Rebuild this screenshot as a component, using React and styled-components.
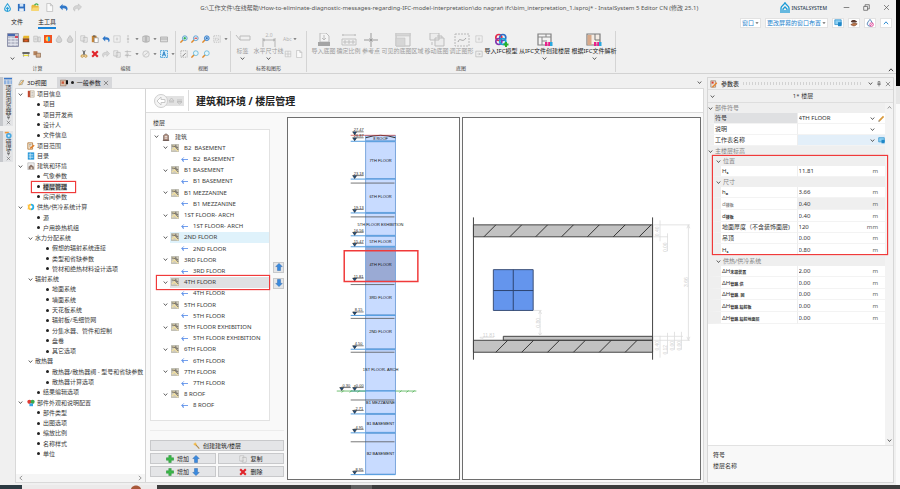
import { useState } from 'react';
import styled, { createGlobalStyle, css } from 'styled-components';

const GlobalStyle = createGlobalStyle`
    * {
        box-sizing: border-box;
    }
    body {
        margin: 0;
        overflow: hidden;
        background: #f0f0f0;
        color: #3a3a3a;
        font-family: "Noto Sans", "Noto Sans CJK SC", sans-serif;
        font-size: 6px;
        line-height: 8px;
    }
    button, input, select {
        margin: 0;
        padding: 0;
        border: 0;
        border-radius: 0;
        background: none;
        color: inherit;
        font: inherit;
    }
    svg {
        display: block;
        flex: none;
    }
`;

const redFrame = css`
    content: '';
    position: absolute;
    border: 1px solid #f03a3a;
    box-shadow: 0 0 1px #f03a3a;
    pointer-events: none;
`;

/* ---------- icons, drawn on a 10 x 10 grid ---------- */

const shapes = {
    drop: <path d="M5 .5C3 3.500 1.500 5 1.500 6.500a3.500 3 0 0 0 7 0C8.500 5 7 3.500 5 .5z" fill="#d4d4d4" stroke="#b4b4b4" strokeWidth=".8" />,
    dropBlue: <path d="M5 .8C3 3.500 1.800 5 1.800 6.500a3.200 2.800 0 0 0 6.400 0C8.200 5 7 3.500 5 .8zM5 9V5.500M3.500 6.500L5 5l1.500 1.500" fill="#dff2fb" stroke="#2a9fd6" strokeWidth="1.200" />,
    save: <><path d="M1 1h8v8H1z" fill="#2f6fc0" /><path d="M3 1h4v3H3z" fill="#cfe3f7" /><path d="M2.500 6h5v3h-5z" fill="#e8eef5" /></>,
    open: <><path d="M.5 3l1-1h3l1 1h3v5.500h-8z" fill="#e8b93c" /><path d="M2 5h7.500L8 9H.5z" fill="#f7d774" /><path d="M4 2.500C5 .5 7 .5 8 2.500" stroke="#3fae49" strokeWidth="1.500" fill="none" /></>,
    doc: <path d="M2 .5h4l2.500 2.500v6.500H2zM6 .5V3h2.500" fill="#fafafa" stroke="#b8b8b8" strokeWidth=".8" />,
    undo: <path d="M.5 4.500L4 1v2c3.500-.5 5.500 1 5.500 3.500 0 1-.5 2-1.500 2.500.5-2-.5-3.500-4-3.200V8z" fill="#2f77c9" />,
    redo: <path d="M9.500 4.500L6 1v2C2.500 2.500.5 4 .5 6.500c0 1 .5 2 1.500 2.500-.5-2 .5-3.500 4-3.200V8z" fill="#d6d6d6" stroke="#b5b5b5" strokeWidth=".5" />,
    boiler: <><path d="M1 4h8v5H1z" fill="#8a4a20" /><path d="M2 1h7v3H1z" fill="#e9b72e" /><path d="M3 6h4v2H3z" fill="#e55a28" /></>,
    grid: <path d="M1.500 1.500h7v7h-7zM5 1.500v7M1.500 5h7" fill="#f2f2f2" stroke="#bdbdbd" strokeWidth=".8" />,
    sheet: <path d="M1 1.500h4.500v7H1zM6.500 2.500h2.500v6H6.500zM2 4h2.500M2 6h2.500" fill="#ececec" stroke="#b0b0b0" strokeWidth=".8" />,
    heat: <><path d="M0 0h10v10H0z" fill="#f4511e" /><path d="M5 2a3 3 0 0 0 0 6z" fill="#ffd54f" /><path d="M5 2a3 3 0 0 1 0 6z" fill="#29a9e0" /></>,
    machine: <><path d="M.5 2.500h9V5h-9z" fill="#666" /><path d="M1 6h8v1.500H1z" fill="#f0e52c" /><path d="M2 5v3.500M8 5v3.500" stroke="#999" /></>,
    blocks: <><path d="M.5 1.500h5v5h-5z" fill="#b5835c" /><path d="M4 4h5.500v5H4z" fill="#d9b08c" stroke="#7d5a3f" strokeWidth=".8" /></>,
    copy: <path d="M1 1h5v6.500H1zM4 3h5v6H4z" fill="#efefef" stroke="#b4b4b4" strokeWidth=".8" />,
    paste: <><path d="M1 1h6v8H1z" fill="#c98534" /><path d="M2.500 .5h3v1.500h-3z" fill="#555" /><path d="M4 3.500h5v6H4z" fill="#fff" stroke="#777" strokeWidth=".7" /></>,
    stretch: <path d="M1 1h8v8H1zM5 3v4M3.500 5h3" fill="none" stroke="#c2c2c2" strokeWidth=".8" />,
    node: <path d="M5 0v3M5 7v3M4 5a1 1 0 0 0 2 0 1 1 0 0 0-2 0" fill="none" stroke="#b0b0b0" strokeWidth=".9" />,
    mirror: <path d="M5 0v10M1 2l3-1v8l-3-1zM9 2L6 1v8l3-1z" fill="#ddd" stroke="#9a9a9a" strokeWidth=".8" />,
    keyboard: <path d="M.5 2.500h9v6h-9zM.5 5h9" fill="#ddd" stroke="#a0a0a0" strokeWidth=".9" />,
    cut: <><path d="M3.500 .5L6 6M6.500 .5L4 6" stroke="#555" strokeWidth="1.200" /><circle cx="2.800" cy="7.600" r="1.500" fill="none" stroke="#c68a1e" strokeWidth="1.100" /><circle cx="7.200" cy="7.600" r="1.500" fill="none" stroke="#c68a1e" strokeWidth="1.100" /></>,
    cross: <path d="M1.500 1.500l7 7M8.500 1.500l-7 7" stroke="#e0242a" strokeWidth="2.600" />,
    axis: <path d="M1 2h8M1 7h8M4 .5v9M2 5l2 2 2-2" fill="none" stroke="#b4b4b4" strokeWidth=".9" />,
    circleSlash: <path d="M5 1a4 4 0 1 1 0 8 4 4 0 0 1 0-8zM2.500 7l5-4" fill="#efefef" stroke="#bcbcbc" strokeWidth=".9" />,
    selectA: <><path d="M.5 .5h9v9h-9z" fill="#d9effb" stroke="#1b8ad0" strokeWidth="1" strokeDasharray="2 1" /><path d="M3 8l2-6 2 6M3.700 6h2.600" fill="none" stroke="#1b78c0" strokeWidth="1.100" /></>,
    zoomIn: <><path d="M.5 9.500L4 6" stroke="#e08a2c" strokeWidth="1.800" /><circle cx="6" cy="4" r="3" fill="#e4f3fc" stroke="#4a96cf" /><path d="M6 2.300v3.400M4.300 4h3.400" stroke="#1ca53a" strokeWidth="1.200" /></>,
    zoomOut: <><path d="M.5 9.500L4 6" stroke="#e08a2c" strokeWidth="1.800" /><circle cx="6" cy="4" r="3" fill="#e4f3fc" stroke="#4a96cf" /><path d="M4.300 4h3.400" stroke="#d8332c" strokeWidth="1.300" /></>,
    zoomFit: <><path d="M.5 9.500L4 6" stroke="#e08a2c" strokeWidth="1.800" /><circle cx="6" cy="4" r="3" fill="#9cc8ee" stroke="#2f77c9" /><path d="M5 4h2M6 3v2" stroke="#1c5aa8" /></>,
    zoomView: <><path d="M.5 9.500L4 6" stroke="#e08a2c" strokeWidth="1.800" /><circle cx="6" cy="4" r="3" fill="#e2f6fc" stroke="#62b4d8" /></>,
    dashed: <path d="M1 1h8v8H1zM3 4h4v2.500H3z" fill="none" stroke="#b0b0b0" strokeWidth=".9" strokeDasharray="1.500 1" />,
    selectFit: <><path d="M1 1h8v8H1z" fill="none" stroke="#a5a5a5" strokeDasharray="1.500 1" /><path d="M3 8l4-4" stroke="#777" strokeWidth="1.200" /></>,
    arrows: <path d="M1 1.500h8v7H1zM3 5h4M5 3.500L6.500 5 5 6.500" fill="none" stroke="#b9b9b9" strokeWidth=".9" />,
    book: <><path d="M1 1h4v8H1z" fill="#c2452d" /><path d="M4 1h5v8H4z" fill="#f4f0e6" stroke="#a89a80" strokeWidth=".7" /><path d="M5.500 3h2.500M5.500 5h2.500M5.500 7h2.500" stroke="#999" strokeWidth=".7" /></>,
    scope: <><path d="M1 1h6v8H1z" fill="#f3e5cf" stroke="#b0763a" /><path d="M4 8l5-4" stroke="#e17a24" strokeWidth="1.800" /><path d="M2.500 3h3M2.500 5h2" stroke="#888" strokeWidth=".8" /></>,
    list: <><path d="M1 .5h8v9H1z" fill="#2596d8" /><path d="M2 3h6M2 5h6M2 7h6M4 1v8" stroke="#d8effb" strokeWidth=".8" /></>,
    house: <><path d="M1 1h8v8.500H1z" fill="#eee" stroke="#a5a5a5" strokeWidth=".7" /><path d="M2 6l3-3 3.500 3v3H2z" fill="#8b7468" /><path d="M4.500 6.500h2V9h-2z" fill="#e8d8c8" /></>,
    heatCool: <><path d="M5 1a4 4 0 0 1 0 8z" fill="#2ab0e4" /><path d="M5 1a4 4 0 0 0 0 8z" fill="#ffc23c" /><circle cx="5" cy="5" r="1.800" fill="#fff" /><path d="M1 3l-1-1M1 7L0 8" stroke="#f39c1f" /></>,
    palette: <><circle cx="3" cy="3.500" r="2.600" fill="#e03a34" /><circle cx="7" cy="3.500" r="2.600" fill="#38a84a" /><path d="M3 5.500h4.500V9H3z" fill="#35a3e2" /></>,
    building: <><path d="M2 3l3-2 3 2v6H2z" fill="#b89888" stroke="#5f4a44" strokeWidth=".8" /><path d="M1 9.300h8" stroke="#5f4a44" /><path d="M3.500 4.500h3M3.500 6.500h3" stroke="#fff" strokeWidth=".9" /></>,
    floor: <><path d="M.5 .5h9v9h-9z" fill="#cfcbbd" stroke="#aaa89c" strokeWidth=".8" /><path d="M1 7.500L4.500 5 9 9M4.500 5L3 1.500" fill="none" stroke="#f0dfa0" strokeWidth="1.500" /><path d="M1 2.500l4 .5 4 4.500M6 1v2.500l3 1" fill="none" stroke="#5c564c" strokeWidth="1" /></>,
    level: <path d="M10 5H1M4 2L1 5l3 3M3 5v3" fill="none" stroke="#4a84e8" strokeWidth="1.100" />,
    up: <path d="M5 .5L9 4.500H6.800V9.500H3.200V4.500H1z" fill="#3a8be0" stroke="#1d5ca8" strokeWidth=".6" />,
    down: <path d="M5 9.500L9 5.500H6.800V.5H3.200v5H1z" fill="#3a8be0" stroke="#1d5ca8" strokeWidth=".6" />,
    plus: <path d="M3.500 .5h3v3h3v3h-3v3h-3v-3h-3v-3h3z" fill="#3cb84a" stroke="#1f8a2e" strokeWidth=".6" />,
    wand: <><path d="M3.500 3.500L9 9.500" stroke="#b08a4a" strokeWidth="1.500" /><path d="M3 0l.8 2.200L6 3l-2.200.8L3 6l-.8-2.200L0 3l2.200-.8z" fill="#f5b32e" /></>,
    pencil: <><path d="M2 8l6-6" stroke="#d99a3c" strokeWidth="2.400" /><path d="M.5 9.500L1.200 7l1.800 1.800z" fill="#6b5538" /></>,
    param: <><path d="M1 1h6v8H1z" fill="#e9ddd2" stroke="#8a6f5b" strokeWidth=".8" /><path d="M2 2h2.500v2.500H2z" fill="#d83a2e" /><path d="M3 9l5.500-5.500" stroke="#e8832a" strokeWidth="1.700" /></>,
    tabIcon: <><path d="M.5 1.500h7v7h-7z" fill="#d9c2ae" stroke="#8f6a50" strokeWidth=".7" /><path d="M2 3h3v3H2z" fill="#cc5a3c" /><path d="M7.500 1.500H10v5H7.500z" fill="#111" /></>,
    view3d: <><path d="M1 8l3-6h4L6 8z" fill="#e8e2d2" stroke="#8b8b7b" strokeWidth=".8" /><path d="M2 9l6-7" stroke="#d9932e" strokeWidth="1.200" /></>,
    screen: <><path d="M1 1h8v6H1z" fill="#8ed0f2" stroke="#2088c8" strokeWidth=".9" /><path d="M5 4h4.500v5H5z" fill="#2088c8" /></>,
    hat: <><path d="M1 3c2-3 6-2 8 0-1 2-7 2-8 0z" fill="#5a3a30" /><path d="M1 7c3 2.500 6 2 8-1L5 5z" fill="#c07848" stroke="#6d3a24" strokeWidth=".7" /></>,
    waterNo: <><path d="M5 .5C3 3 1.500 4.500 1.500 6.500a3.500 3 0 0 0 6 1.500C8.500 5 7 3 5 .5z" fill="#f2f8fd" stroke="#3a6ea8" strokeWidth="1" /><circle cx="7" cy="7" r="2.200" fill="#fff" stroke="#e0308a" strokeWidth="1" /><path d="M5.500 8.500l3-3" stroke="#e0308a" strokeWidth=".9" /></>,
    panels: <><path d="M0 1h10v2H0z" fill="#3c78c8" /><path d="M0 4h3v5H0zM4 4h3v5H4zM8 4h2v5H8z" fill="#8fb2e0" /></>,
    errors: <><path d="M1 1h5v2H1z" fill="#f0963a" /><circle cx="6" cy="6" r="3.500" fill="#49a8e0" /><path d="M4.500 6h3M6 4.500v3" stroke="#fff" strokeWidth=".9" /></>,
    pin: <path d="M3.500 1h3v4h-3zM2 5.500h6M5 5.500V9" fill="none" stroke="#555" strokeWidth="1.100" />,
    close: <path d="M1.500 1.500l7 7M8.500 1.500l-7 7" stroke="#555" strokeWidth="1" />,
    minimize: <path d="M1 5h8" stroke="#555" strokeWidth="1" />,
    restore: <path d="M1 3.500h5.500V9H1zM3 3.500V1h6v6H6.500" fill="none" stroke="#555" strokeWidth="1" />,
    chevron: <path d="M1.500 3L5 7l3.500-4" fill="none" stroke="#444" strokeWidth="1.700" />,
    chevronUp: <path d="M1.500 7L5 3l3.500 4" fill="none" stroke="currentColor" strokeWidth="1.500" />,
    chevronLeft: <path d="M7 1.500L3 5l4 3.500" fill="none" stroke="#777" strokeWidth="1.200" />,
    chevronRight: <path d="M3 1.500L7 5 3 8.500" fill="none" stroke="#777" strokeWidth="1.200" />,
    caret: <path d="M1 3h8L5 7.500z" fill="#666" />,
    blank: null,
};

const Icon = ({ name, size = 8 }) => (
    <svg width={size} height={size} viewBox="0 0 10 10" fill="none" aria-hidden="true">{shapes[name]}</svg>
);

/* large ribbon icons on a 16 x 14 grid */
const ifcMark = <path d="M0 0h2.400v4H0zM3.200 0h2.400v4H3.200z" />;
const bigShapes = {
    tag: <path d="M1 2l4 5h10V3H5M5 3v4" fill="none" stroke="#bcbcbc" />,
    dimension: <><path d="M2 5v9M14 5v9M2 7h12M4 6L2 7l2 1M12 6l2 1-2 1" fill="none" stroke="#b4b4b4" /><text x="8" y="4" fontSize="5" textAnchor="middle" fill="#b4b4b4">2.0</text></>,
    importMap: <><path d="M4 0h6l3 3v6H4zM8 2v5M6 5l2 2 2-2" fill="#f4f4f4" stroke="#bcbcbc" /><path d="M2 9h12v4H2z" fill="#a4a4a4" /></>,
    scale: <path d="M1 2h14M2 1v2M14 1v2M1 6h14v6H1zM3 8h2v2H3zM7 8h2v2H7zM11 8h2v2h-2z" fill="none" stroke="#bcbcbc" strokeWidth=".9" />,
    point: <path d="M8 0v14M1 7h14M6.500 5.500l3 3M9.500 5.500l-3 3" stroke="#9a9a9a" strokeWidth="1" />,
    region: <><path d="M1 0h14v13H1z" fill="#efefef" stroke="#b8b8b8" /><path d="M1 0h14v3H1zM1 5h9v8H1z" fill="#d6d6d6" stroke="#c4c4c4" strokeWidth=".6" /></>,
    move: <path d="M1 0h9v7H1zM6 5h9v8H6zM8 3h5v2M3 12V9" fill="#ececec" stroke="#bdbdbd" />,
    level: <><path d="M1 1h14v12H1z" fill="#efefef" stroke="#b8b8b8" strokeDasharray="2 1" /><path d="M4 9c2-6 4 2 8-4" stroke="#a4a4a4" fill="none" /></>,
    ifc: <g fill="none" strokeWidth="1.700"><circle cx="5.800" cy="4.500" r="3" stroke="#e32a4c" /><circle cx="9.800" cy="4.500" r="3" stroke="#2a6fc8" /><circle cx="5.800" cy="8.500" r="3" stroke="#8338b0" /><circle cx="9.800" cy="8.500" r="3" stroke="#18a8d8" /><path d="M13 9v5M10.500 11.500h5" stroke="#27b22e" strokeWidth="2" /></g>,
    ifcFloors: <><path d="M1 1h13v11H1z" fill="#f4f4f4" stroke="#808080" strokeWidth="1.200" /><path d="M1 4h13M5 4v8M9 1v3M5 8h5" stroke="#888" /><g transform="translate(8 9)" fill="#e8208a">{ifcMark}</g><path d="M13 9h2.500v4H13z" fill="#28a8e0" /></>,
    ifcParse: <><path d="M1 1h13v11H1z" fill="#f4ece4" stroke="#7d7d7d" strokeWidth="1.200" /><path d="M1.500 2h4v10h-4z" fill="#d8a888" /><path d="M9 1v6h5" stroke="#777" fill="none" /><g transform="translate(8 9)" fill="#e8208a">{ifcMark}</g><path d="M13 9h2.500v4H13z" fill="#28a8e0" /></>,
    calculator: <><path d="M2.500 .5h11v13h-11z" fill="#b9bccb" stroke="#9094ac" /><path d="M3 1h7v2H3z" fill="#4868b0" /><path d="M10 3h3v2h-3z" fill="#d8455a" /><path d="M3 5.500h10M3 8.500h10M3 11.500h10M6 4v9M10 5v8" stroke="#e6e8f0" strokeWidth=".8" /></>,
};

const BigIcon = ({ name }) => (
    <svg width="16" height="14" viewBox="0 0 16 14" aria-hidden="true">{bigShapes[name]}</svg>
);

/* ---------- window frame ---------- */

const Desktop = styled.div`
    display: grid;
    grid-template: minmax(0, 1fr) 4px / minmax(0, 1fr) 4px;
    height: 100vh;
`;

const Window = styled.div`
    display: flex;
    flex-direction: column;
    min-height: 0;
    background: #f0f0f0;
`;

const ScreenEdge = styled.div`
    background: linear-gradient(#000 86px, #e6e6e6 86px, #e6e6e6 104px, #fafafa 104px);
`;

const Taskbar = styled.footer`
    grid-column: 1 / -1;
    display: grid;
    grid-template-columns: 22px 135px 194px 21px 1fr;
    background: #3c3c3c;
    > :nth-child(1) { background: #2c3a42; }
    > :nth-child(2) { background: radial-gradient(circle at 114px 6px, #a8583a 5px, #eceaea 6px); }
    > :nth-child(4) { background: #5f5f5f; }
`;

const TitleBar = styled.header`
    display: flex;
    align-items: center;
    height: 15px;
    padding: 0 6px 0 3px;
`;

const QuickAccess = styled.div`
    display: flex;
    gap: 5px;
    width: 116px;
`;

const IconButton = styled.button`
    display: flex;
    align-items: center;
    justify-content: center;
    gap: 1px;
    flex: none;
`;

const WindowTitle = styled.h1`
    flex: 1;
    margin: 0;
    color: #555;
    font-size: 6px;
    font-weight: 400;
    text-align: center;
    white-space: nowrap;
`;

const Brand = styled.div`
    display: flex;
    align-items: center;
    gap: 2px;
    color: #2c3e50;
    font-size: 5px;
    font-weight: 500;
    margin-right: 16px;
`;

const WindowButtons = styled.div`
    display: flex;
    gap: 13px;
`;

const MenuBar = styled.nav`
    display: flex;
    align-items: center;
    height: 15px;
    padding: 0 4px 0 11px;
`;

const MenuTab = styled.button`
    height: 13px;
    margin-right: 15px;
    border-bottom: 2px solid ${({ $active }) => ($active ? '#1883d7' : 'transparent')};
    color: #222;
`;

const MenuRight = styled.div`
    display: flex;
    gap: 4px;
    margin-left: auto;
`;

const LayoutButton = styled(IconButton)`
    height: 10px;
    min-width: 12px;
    padding: 0 1px;
    border: 1px solid #e2e2e2;
    background: #fff;
    color: #1c82cc;
`;

/* ---------- ribbon ---------- */

const Ribbon = styled.div`
    display: flex;
    height: 44px;
    padding-top: 1px;
    border-bottom: 1px solid #d2d2d2;
`;

const Group = styled.section`
    display: flex;
    flex-direction: column;
    width: ${({ $width }) => $width}px;
    height: 41px;
    padding: 0 ${({ $pad = 3 }) => $pad}px;
    border-right: 1px solid #d4d4d4;
`;

const GroupBody = styled.div`
    display: flex;
    flex: 1;
`;

const GroupName = styled.div`
    color: #444;
    font-size: 5px;
    line-height: 7px;
    text-align: center;
`;

const BigTool = styled.button`
    display: flex;
    flex-direction: column;
    align-items: center;
    flex: none;
    width: ${({ $width }) => $width}px;
    padding-top: 2px;
    color: ${({ disabled }) => (disabled ? '#9c9c9c' : '#222')};
    white-space: nowrap;
    > span { line-height: 9px; }
`;

const SmallTools = styled.div`
    display: flex;
    flex-direction: column;
    gap: 5px;
    padding-top: 3px;
`;

const ToolRow = styled.div`
    display: flex;
    align-items: center;
    gap: 1px;
    height: 10px;
    color: #b0b0b0;
    font-size: 5px;
`;

const ToolButton = styled(IconButton)`
    width: ${({ $narrow }) => ($narrow ? 6 : 10)}px;
`;

const RibbonToggle = styled(IconButton)`
    align-self: flex-end;
    margin: 0 2px 0 auto;
    color: #333;
`;

/* ---------- docked panels ---------- */

const Workspace = styled.div`
    display: flex;
    flex: 1;
    min-height: 0;
    padding: 3px 2px 2px 0;
`;

const DockStrip = styled.aside`
    display: flex;
    flex-direction: column;
    gap: 5px;
    width: 15px;
`;

const DockTab = styled.div`
    display: flex;
    flex-direction: column;
    align-items: center;
    width: 13px;
    padding-bottom: 1px;
    border-left: 3px solid #c6c8cc;
    background: #e4e5e7;
    > button { writing-mode: vertical-rl; }
`;

const Documents = styled.div`
    display: flex;
    flex-direction: column;
    flex: 1;
    min-width: 0;
`;

const DocTabs = styled.div`
    display: flex;
    align-items: center;
    gap: 7px;
    height: 11px;
    padding-right: 2px;
    > :last-child { margin-left: auto; }
`;

const DocTab = styled.button`
    display: flex;
    align-items: center;
    gap: 2px;
    height: 11px;
    padding: 0 3px;
    background: ${({ $active }) => ($active ? '#d7d8db' : 'transparent')};
    color: #222;
`;

const DocBody = styled.div`
    display: flex;
    flex: 1;
    min-height: 0;
    border: 1px solid #d9d9d9;
    background: #fff;
`;

const NavPanel = styled.nav`
    display: flex;
    flex-direction: column;
    width: 130px;
    border-right: 1px solid #d4d4d4;
`;

const NavTree = styled.div`
    display: flex;
    flex: 1;
    flex-direction: column;
    min-height: 0;
    padding-bottom: 15px;
`;

const NavRow = styled.button`
    display: flex;
    align-items: center;
    flex: 1;
    gap: 2px;
    min-height: 0;
    padding-left: ${({ $indent }) => $indent}px;
    line-height: 8px;
    text-align: left;
    white-space: nowrap;
    > svg + svg { margin-left: 2px; }
    > span {
        position: relative;
        ${({ $current }) => $current && css`
            background: #dcdcdc;
            font-weight: 700;
            &::after { ${redFrame} inset: -2px -9px -2px -12px; }
        `}
    }
`;

const Bullet = styled.i`
    width: 3px;
    height: 3px;
    margin: 0 1px;
    border-radius: 50%;
    background: #222;
`;

const ScrollX = styled.div`
    display: flex;
    justify-content: space-between;
    padding: 1px 2px;
    background: #f5f5f5;
`;

const Page = styled.main`
    display: flex;
    flex-direction: column;
    flex: 1;
    min-width: 0;
    background: #f9f9f9;
`;

const PageHead = styled.div`
    display: flex;
    align-items: center;
    height: 24px;
    padding-left: 7px;
    border-bottom: 1px solid #dcdcdc;
    background: #fff;
`;

const HistoryNav = styled(IconButton)`
    height: 21px;
    margin-right: 7px;
    padding-right: 3px;
    border-right: 1px solid #dcdcdc;
`;

const PageTitle = styled.h2`
    margin: 0;
    color: #222;
    font-size: 10px;
    font-weight: 700;
    line-height: 14px;
`;

const PageBody = styled.div`
    display: flex;
    flex: 1;
    gap: 3px;
    min-height: 0;
    padding: 4px 2px 2px 4px;
`;

const FloorPanel = styled.section`
    display: flex;
    flex-direction: column;
    flex: none;
    width: 134px;
    padding: 2px 0 3px;
`;

const FloorLabel = styled.h3`
    margin: 0 0 2px 3px;
    font-size: 6px;
    font-weight: 400;
    line-height: 8px;
`;

const FloorArea = styled.div`
    display: flex;
    align-items: center;
    flex: 1;
    gap: 3px;
    min-height: 0;
`;

const FloorTree = styled.div`
    display: flex;
    flex: 1;
    flex-direction: column;
    align-self: stretch;
    padding: 1px 0 9px;
    border: 1px solid #e2e2e2;
    background: #fff;
`;

const FloorRow = styled.div`
    position: relative;
    display: flex;
    flex: 1;
    align-items: center;
    min-height: 0;
    padding-left: ${({ $depth }) => [3, 12, 29][$depth]}px;
    ${({ $marked }) => $marked && css`
        &::after { ${redFrame} inset: -2px -1px -2px 5px; }
    `}
`;

const FloorItem = styled.button`
    display: flex;
    flex: 1;
    align-self: stretch;
    align-items: center;
    gap: 5px;
    margin-left: ${({ $leaf }) => ($leaf ? 0 : 2)}px;
    padding-left: 1px;
    background: ${({ $tone }) => $tone || 'none'};
    line-height: 8px;
    text-align: left;
    white-space: pre;
`;

const OrderButtons = styled.div`
    display: flex;
    flex-direction: column;
    gap: 5px;
`;

const PushButton = styled.button`
    display: flex;
    align-items: center;
    justify-content: center;
    gap: 3px;
    min-width: 11px;
    height: 11px;
    border: 1px solid #c8c9cb;
    background: #e4e5e7;
    color: #222;
`;

const Actions = styled.div`
    display: grid;
    grid-template-columns: 1fr 1fr;
    gap: 2px;
    margin-top: 9px;
    padding-top: 9px;
    border-top: 1px solid #ececec;
    > :first-child { grid-column: 1 / -1; }
`;

const Drawings = styled.div`
    display: grid;
    grid-template-columns: 174fr 240fr;
    flex: 1;
    gap: 2px;
    min-width: 0;
    min-height: 0;
`;

const Canvas = styled.figure`
    margin: 0;
    min-height: 0;
    border: 1px solid #6e6e6e;
    background: #fff;
    > svg { width: 100%; height: 100%; }
`;

/* ---------- parameter panel ---------- */

const ParamPanel = styled.aside`
    display: flex;
    flex-direction: column;
    flex: none;
    width: 187px;
    margin-left: 3px;
    border: 1px solid #d6d6d6;
    background: #f8f8f8;
`;

const ParamHead = styled.div`
    display: flex;
    align-items: center;
    gap: 3px;
    height: 11px;
    padding: 0 2px;
    background: #f0f0f0;
    font-weight: 500;
`;

const Grip = styled.div`
    flex: 1;
    height: 3px;
    margin: 0 3px 0 1px;
    background: repeating-linear-gradient(90deg, #d2d2d2 0 1px, transparent 1px 3px);
`;

const ParamObject = styled.div`
    display: flex;
    align-items: center;
    height: 14px;
    padding: 0 2px;
    border-top: 1px solid #dedede;
    border-bottom: 1px solid #dedede;
    background: #f0f0f0;
    > span { flex: 1; text-align: center; }
`;

const ParamScroll = styled.div`
    display: flex;
    flex: 1;
    min-height: 0;
    background: #fff;
`;

const ParamTable = styled.table`
    flex: 1;
    align-self: flex-start;
    table-layout: fixed;
    border-spacing: 0;
    background: #fff;
    td, th { padding: 0; font-weight: 400; text-align: left; }
`;

const MarkedBody = styled.tbody`
    position: relative;
    &::after { ${redFrame} inset: -1px -3px 1px 4px; }
`;

const SectionCell = styled.th`
    height: 10px;
    background: #efefef;
    color: #858585;
    line-height: 10px;
    > span {
        display: flex;
        align-items: center;
        gap: 2px;
        padding-left: ${({ $inner }) => ($inner ? 8 : 0)}px;
    }
`;

const ParamRow = styled.tr`
    height: ${({ $tall }) => ($tall ? 12 : 11)}px;
    color: ${({ $muted }) => ($muted ? '#8a8a8a' : '#333')};
    th {
        padding-left: 1px;
        border-left: ${({ $gutter }) => $gutter}px solid #efefef;
        border-bottom: 1px solid #f3f3f3;
        background: ${({ $selected }) => ($selected ? '#dfe0e2' : 'none')};
        line-height: 8px;
        white-space: nowrap;
    }
    td {
        padding-left: 1px;
        border-left: 1px solid #eee;
        border-bottom: 1px solid #f3f3f3;
        background: ${({ $fill }) => $fill || 'none'};
    }
    sub { font-size: 4px; font-weight: 700; line-height: 0; vertical-align: -1px; }
`;

const ValueBox = styled.div`
    display: flex;
    align-items: center;
    height: 8px;
    line-height: 8px;
    input, select { flex: 1; min-width: 0; width: 20px; height: 8px; appearance: none; outline: none; color: #333; }
    > span { min-width: 13px; padding-right: 7px; text-align: right; color: #666; }
    > svg { margin-right: 3px; }
    > svg:last-child { margin-right: 0; }
`;

const ScrollY = styled.div`
    display: flex;
    flex-direction: column;
    align-items: center;
    justify-content: space-between;
    width: 8px;
    padding: 2px 0;
    background: #f3f3f3;
    color: #777;
`;

const ParamHelp = styled.div`
    height: 37px;
    padding: 4px 5px;
    border-top: 1px solid #e2e2e2;
    line-height: 11px;
    > strong { display: block; font-weight: 500; }
`;

/* ---------- data ---------- */

// kind: g = group with icon, s = subgroup, i = icon only, 1/2 = leaf depth
const navRows = [
    ['g', '项目信息', 'book'], ['1', '项目'], ['1', '项目开发商'], ['1', '设计人'], ['1', '文件信息'],
    ['i', '项目范围', 'scope'], ['i', '目录', 'list'],
    ['g', '建筑和环境', 'house'], ['1', '气象参数'], ['1', '楼层管理'], ['1', '房间参数'],
    ['g', '供热/供冷系统计算', 'heatCool'], ['1', '源'], ['1', '户用换热机组'],
    ['s', '水力分配系统'], ['2', '假想的辐射系统连接'], ['2', '类型和省缺参数'], ['2', '管材和绝热材料设计选项'],
    ['s', '辐射系统'], ['2', '地面系统'], ['2', '墙面系统'], ['2', '天花板系统'], ['2', '辐射板/毛细管网'],
    ['2', '分集水器、管件和控制'], ['2', '盘卷'], ['2', '其它选项'],
    ['s', '散热器'], ['2', '散热器/散热器阀 - 型号和省缺参数'], ['2', '散热器计算选项'],
    ['1', '结果编辑选项'],
    ['g', '部件外观和说明配置', 'palette'], ['1', '部件类型'], ['1', '出图选项'], ['1', '缩放比例'], ['1', '名称样式'], ['1', '单位'],
];

const navIndent = { g: 2, i: 11, s: 12, 1: 20, 2: 29 };

const floors = [
    'B2  BASEMENT', 'B1 BASEMENT', 'B1 MEZZANINE', '1ST FLOOR- ARCH', '2ND FLOOR', '3RD FLOOR',
    '4TH FLOOR', '5TH FLOOR', '5TH FLOOR EXHIBITION', '6TH FLOOR', '7TH FLOOR', '8 ROOF',
];

const storeys = [
    { name: '8 ROOF', top: 135, bottom: 140, text: 138, mark: '26.87' },
    { name: '7TH FLOOR', top: 141, bottom: 178, text: 160, mark: '23.18' },
    { name: '6TH FLOOR', top: 178, bottom: 212, text: 196, mark: '19.13', slab: 182 },
    { name: '5TH FLOOR EXHIBITION', top: 213, bottom: 235, text: 224, mark: '16.56', slab: 216 },
    { name: '5TH FLOOR', top: 236, bottom: 246, text: 241, mark: '15.47' },
    { name: '4TH FLOOR', top: 247, bottom: 281, text: 264, mark: '11.81', dark: true },
    { name: '3RD FLOOR', top: 281, bottom: 315, text: 298, mark: '8.15', slab: 284 },
    { name: '2ND FLOOR', top: 315, bottom: 349, text: 332, mark: '4.50', slab: 318 },
    { name: '1ST FLOOR- ARCH', top: 350, bottom: 391, text: 370, mark: '±0.00', slab: 352 },
    { name: 'B1 MEZZANINE', top: 391, bottom: 414, text: 403, mark: '-2.71', slab: 400 },
    { name: 'B1 BASEMENT', top: 415, bottom: 433, text: 424, mark: '-4.95' },
    { name: 'B2  BASEMENT', top: 434, bottom: 475, text: 454, mark: '-8.95', slab: 442 },
];

const sizeParams = [
    { name: 'h', sub: 'a', value: '3.66', unit: 'm' },
    { name: 'd', sub: '楼板', value: '0.40', unit: 'm', muted: true, fill: '#efefef', tall: true },
    { name: 'd', sub: '楼板', value: '0.40', unit: 'm', tall: true },
    { name: '地面厚度（不含装饰面层)', value: '120', unit: 'mm' },
    { name: '吊顶', value: '0.00', unit: 'm' },
    { name: 'H', sub: 's', value: '0.80', unit: 'm', tall: true },
];

const heatParams = [
    { name: 'ΔH', sub: '末端装置', value: '2.00', unit: 'm' },
    { name: 'ΔH', sub: '管路.供', value: '0.00', unit: 'm', tall: true },
    { name: 'ΔH', sub: '管路. 回', value: '0.00', unit: 'm' },
    { name: 'ΔH', sub: '管路.辐射板', value: '0.00', unit: 'm', tall: true },
    { name: 'ΔH', sub: '管路.辐射地面层', value: '0.00', unit: 'm', tall: true },
];

/* ---------- parts ---------- */

const Logo = () => (
    <svg width="10" height="12" viewBox="0 0 10 12" fill="none" aria-hidden="true">
        <path d="M1 11V6C1 4 4 3 5 .8 6 3 9 4 9 6v5M3 11V7l2-2 2 2v4M5 11V8" stroke="#1a9ad6" strokeWidth="1.300" />
    </svg>
);

const Tool = ({ name, label, size = 9 }) => (
    <IconButton aria-label={label || name}><Icon name={name} size={size} /></IconButton>
);

// 'v' in a list of tools stands for the little drop-down caret
const Tools = ({ items }) => (
    <ToolRow>
        {items.map((name, i) => (name === 'v'
            ? <ToolButton key={i} $narrow aria-label="更多"><Icon name="caret" size={4} /></ToolButton>
            : <ToolButton key={i} aria-label={name}><Icon name={name} size={8} /></ToolButton>))}
    </ToolRow>
);

const Large = ({ icon, label, width, disabled, menu }) => (
    <BigTool $width={width} disabled={disabled} aria-label={label}>
        <BigIcon name={icon} />
        <span>{label}</span>
        {menu && <Icon name="chevron" size={5} />}
    </BigTool>
);

const Section = ({ title, inner }) => (
    <tr>
        <SectionCell colSpan={2} $inner={inner}>
            <span><Icon name="chevron" size={5} />{title}</span>
        </SectionCell>
    </tr>
);

const Param = ({ id, row }) => (
    <ParamRow $gutter={13} $tall={row.tall} $muted={row.muted} $fill={row.fill}>
        <th scope="row"><label htmlFor={id}>{row.name}{row.sub && <sub>{row.sub}</sub>}</label></th>
        <td><ValueBox><input id={id} defaultValue={row.value} /><span>{row.unit}</span></ValueBox></td>
    </ParamRow>
);

const Choice = ({ id, label, value, selected, fill, icon = 'blank' }) => (
    <ParamRow $gutter={6} $selected={selected} $fill={fill}>
        <th scope="row"><label htmlFor={id}>{label}</label></th>
        <td>
            <ValueBox>
                <select id={id} defaultValue={value}><option>{value}</option></select>
                <Icon name="chevron" size={5} />
                <Icon name={icon} size={7} />
            </ValueBox>
        </td>
    </ParamRow>
);

const LevelMark = ({ x = 351, y, text }) => (
    <g>
        <path d={`M${x + 2} ${y - 3}h11M${x + 2} ${y - 3}l2 3 2-3`} stroke="#222" strokeWidth=".6" fill="#1c4f86" />
        <text x={x + 8} y={y - 3.5} textAnchor="middle" fontSize="4" fill="#222">{text}</text>
    </g>
);

const Elevation = () => (
    <svg viewBox="288 118 172 361" fontFamily="Liberation Sans, sans-serif" role="img" aria-label="楼层立面">
        {storeys.map(s => (
            <rect key={s.name} x="366" y={s.top} width="30" height={s.bottom - s.top} fill={s.dark ? '#9aaad4' : '#c8dbff'} stroke="#7ba6dc" strokeWidth="1" />
        ))}
        <path d="M366 137q15-5 30 0" fill="#c8dbff" stroke="#333" strokeWidth="1" />
        <path d="M351 134.500h45" stroke="#c83c3c" strokeWidth=".7" />
        <LevelMark y={134} text="27.47" />
        {storeys.map(s => (
            <g key={s.name}>
                <path d={`M351 ${s.bottom + 0.5}h45`} stroke="#4f9be0" strokeWidth="1" />
                {s.slab && <path d={`M351 ${s.slab + 0.5}h44`} stroke="#555" strokeWidth=".8" />}
                <LevelMark y={s.bottom} text={s.mark} />
                <text x="381" y={s.text + 1.5} textAnchor="middle" fontSize="4" fill="#111">{s.name}</text>
            </g>
        ))}
        <path d="M337 391.500h29M396 391.500h21" stroke="#4caf50" strokeWidth=".8" />
        <path d="M342 393l2-2M350 393l2-2M358 393l2-2M400 393l2-2M407 393l2-2M413 393l2-2" stroke="#4caf50" strokeWidth=".8" />
        <LevelMark x={338} y={391} text="-0.30" />
        <path d="M344.500 250.500h74v31h-74z" fill="none" stroke="#f03a3a" strokeWidth="1.500" />
    </svg>
);

const dims = [
    { x: 659, y: 231, text: '0.40' }, { x: 667, y: 247, text: '0.00' }, { x: 688, y: 282, text: '3.66' },
    { x: 539, y: 323, text: '0.80' }, { x: 659, y: 346, text: '0.40' }, { x: 667, y: 350, text: '0.12' },
    { x: 674, y: 346, text: '0.00' }, { x: 681, y: 346, text: '0.00' },
];

const CrossSection = () => (
    <svg viewBox="463 118 238 361" fontFamily="Liberation Sans, sans-serif" role="img" aria-label="楼层剖面">
        <path d="M473.500 224.500h180v12h-180zM473.500 340.500h180v12h-180zM503.500 336.500h150v4h-150z" fill="#c2c2c2" stroke="#444" />
        {[0, 1, 2, 3, 4, 5, 6].map(i => (
            <path key={i} d={`M${484 + i * 26} 236.500l12-12`} stroke="#333" strokeWidth="1" />
        ))}
        {[0, 1, 2, 3, 4, 5].map(i => (
            <path key={i} d={`M${496 + i * 26} 352.500l12-12`} stroke="#333" strokeWidth="1" />
        ))}
        <path d="M473.500 217v143M653.500 217v143" stroke="#444" />
        <path d="M493.500 269.500h40v41h-40z" fill="#6495ed" stroke="#3a5078" />
        <path d="M513.500 269.500v41M493.500 290.500h40" stroke="#2c4470" />
        <g stroke="#dcdcdc" strokeWidth=".8" fill="none">
            <path d="M654 224.500h37M654 236.500h15M654 336.500h30M654 340.500h37M661 220v21M668.500 233v18M689.500 224.500v116M661 336v22M668.500 333v21M675.500 332v18M682.500 332v18M534 310.500h8M540.500 311v25" />
            <path d="M688 228l1.500-3.500 1.500 3.500M688 337l1.500 3.500 1.500-3.500M539 314l1.500-3 1.500 3M539 333l1.500 3 1.500-3M480 337.500h14M480 337.500l2 2 2-2" />
        </g>
        {dims.map(d => (
            <text key={`${d.x}-${d.y}`} transform={`translate(${d.x + 1} ${d.y}) rotate(-90)`} textAnchor="middle" fontSize="5" fill="#cfcfcf">{d.text}</text>
        ))}
        <text x="489" y="337" textAnchor="middle" fontSize="5" fill="#cfcfcf">11.81</text>
    </svg>
);

const NavItem = ({ row: [kind, label, icon], current, onClick }) => (
    <NavRow $indent={navIndent[kind]} $current={current} onClick={onClick}>
        {(kind === 'g' || kind === 's') && <Icon name="chevron" size={5} />}
        {(kind === '1' || kind === '2') && <Bullet />}
        {icon && <Icon name={icon} size={8} />}
        <span>{label}</span>
    </NavRow>
);

const FloorNode = ({ name, selected, onSelect }) => {
    const isSelected = name === selected;
    const tone = isSelected ? '#e0e1e3' : name === '2ND FLOOR' && '#dff2fb';
    return (
        <>
            <FloorRow $depth={1} $marked={isSelected}>
                <Icon name="chevron" size={5} />
                <FloorItem $tone={tone} onClick={() => onSelect(name)}><Icon name="floor" size={8} />{name}</FloorItem>
            </FloorRow>
            <FloorRow $depth={2}>
                <FloorItem $leaf><Icon name="level" size={7} />{name}</FloorItem>
            </FloorRow>
        </>
    );
};

const App = () => {
    const [page, setPage] = useState('楼层管理');
    const [floor, setFloor] = useState('4TH FLOOR');

    return (
        <Desktop>
            <GlobalStyle />
            <Window>
                <TitleBar>
                    <QuickAccess>
                        <Tool name="dropBlue" label="InstalSystem" />
                        <Tool name="save" label="保存" />
                        <Tool name="open" label="打开" />
                        <Tool name="doc" label="新建" />
                        <Tool name="undo" label="撤销" />
                        <Tool name="redo" label="重做" />
                    </QuickAccess>
                    <WindowTitle>G:\工作文件\在线帮助\How-to-eliminate-diagnostic-messages-regarding-IFC-model-interpretation\do nagrań ifc\bim_interpretation_1.isproj* - InstalSystem 5 Editor CN (修改 25.1)</WindowTitle>
                    <Brand><Logo />INSTALSYSTEM</Brand>
                    <WindowButtons>
                        <Tool name="minimize" label="最小化" size={7} />
                        <Tool name="restore" label="还原" size={7} />
                        <Tool name="close" label="关闭" size={7} />
                    </WindowButtons>
                </TitleBar>

                <MenuBar>
                    <MenuTab>文件</MenuTab>
                    <MenuTab $active>主工具</MenuTab>
                    <MenuRight>
                        <LayoutButton>窗口<Icon name="caret" size={4} /></LayoutButton>
                        <LayoutButton>更改屏幕的窗口布置<Icon name="caret" size={4} /></LayoutButton>
                        <LayoutButton aria-label="屏幕"><Icon name="screen" size={8} /></LayoutButton>
                        <LayoutButton aria-label="培训"><Icon name="hat" size={8} /></LayoutButton>
                        <LayoutButton aria-label="系统"><Icon name="waterNo" size={8} /></LayoutButton>
                        <LayoutButton aria-label="收起"><Icon name="chevronUp" size={6} /></LayoutButton>
                    </MenuRight>
                </MenuBar>

                <Ribbon>
                    <Group $width={76} $pad={4}>
                        <GroupBody>
                            <BigTool $width={17} aria-label="计算">
                                <BigIcon name="calculator" />
                                <span>&nbsp;</span>
                                <Icon name="chevron" size={5} />
                            </BigTool>
                            <SmallTools>
                                <Tools items={['boiler', 'sheet', 'heat', 'drop', 'drop']} />
                                <Tools items={['machine', 'blocks']} />
                            </SmallTools>
                        </GroupBody>
                        <GroupName>计算</GroupName>
                    </Group>
                    <Group $width={100}>
                        <GroupBody>
                            <SmallTools>
                                <Tools items={['copy', 'paste', 'undo', 'stretch', 'node', 'v', 'mirror', 'v', 'keyboard']} />
                                <Tools items={['cut', 'cross', 'redo', 'copy', 'axis', 'v', 'circleSlash', 'v', 'selectA', 'v']} />
                            </SmallTools>
                        </GroupBody>
                        <GroupName>编辑</GroupName>
                    </Group>
                    <Group $width={55}>
                        <GroupBody>
                            <SmallTools>
                                <Tools items={['zoomIn', 'zoomOut', 'zoomFit', 'dashed', 'v']} />
                                <Tools items={['selectFit', 'zoomView', 'zoomView']} />
                            </SmallTools>
                        </GroupBody>
                        <GroupName>视图</GroupName>
                    </Group>
                    <Group $width={76} $pad={0}>
                        <GroupBody>
                            <Large icon="tag" label="标签" width={23} disabled menu />
                            <Large icon="dimension" label="水平尺寸线" width={29} disabled menu />
                            <SmallTools>
                                <ToolRow>Abc<Tool name="caret" label="文字" size={4} /></ToolRow>
                                <Tools items={['grid', 'doc']} />
                            </SmallTools>
                        </GroupBody>
                        <GroupName>标签和图形</GroupName>
                    </Group>
                    <Group $width={309} $pad={4}>
                        <GroupBody>
                            <Large icon="importMap" label="导入底图" width={25} disabled />
                            <Large icon="scale" label="确定比例" width={25} disabled />
                            <Large icon="point" label="参考点" width={20} disabled />
                            <Large icon="region" label="可见的底图区域" width={43} disabled />
                            <Large icon="move" label="移动底图" width={25} disabled />
                            <Large icon="level" label="调正图形" width={25} disabled />
                            <SmallTools>
                                <Tools items={['stretch']} />
                                <Tools items={['arrows']} />
                            </SmallTools>
                            <Large icon="ifc" label="导入IFC模型" width={34} />
                            <Large icon="ifcFloors" label="从IFC文件创建楼层" width={53} menu />
                            <Large icon="ifcParse" label="根据IFC文件解析" width={46} menu />
                        </GroupBody>
                        <GroupName>底图</GroupName>
                    </Group>
                    <RibbonToggle aria-label="折叠功能区"><Icon name="chevronUp" size={6} /></RibbonToggle>
                </Ribbon>

                <Workspace>
                    <DockStrip>
                        <DockTab>
                            <Icon name="panels" size={8} />
                            <button>项目浏览器</button>
                            <Icon name="pin" size={5} />
                            <Icon name="close" size={5} />
                        </DockTab>
                        <DockTab>
                            <Icon name="errors" size={8} />
                            <button>错误</button>
                            <Icon name="pin" size={5} />
                            <Icon name="close" size={5} />
                        </DockTab>
                    </DockStrip>

                    <Documents>
                        <DocTabs>
                            <DocTab><Icon name="view3d" size={7} />3D视图</DocTab>
                            <DocTab $active><Icon name="tabIcon" size={8} /><Bullet />一般参数<Icon name="close" size={6} /></DocTab>
                            <Tool name="chevron" label="标签列表" size={5} />
                        </DocTabs>
                        <DocBody>
                            <NavPanel>
                                <NavTree>
                                    {navRows.map(row => (
                                        <NavItem key={row[1]} row={row} current={row[1] === page} onClick={() => setPage(row[1])} />
                                    ))}
                                </NavTree>
                                <ScrollX><Icon name="chevronLeft" size={6} /><Icon name="chevronRight" size={6} /></ScrollX>
                            </NavPanel>

                            <Page>
                                <PageHead>
                                    <HistoryNav aria-label="返回">
                                        <svg width="32" height="16" viewBox="0 0 32 16" fill="none">
                                            <path d="M12 3h19v10H12z" fill="#e2e2e2" />
                                            <circle cx="8" cy="8" r="6.500" fill="#f4f4f4" stroke="#cfcfcf" />
                                            <path d="M12 6.500H8V4L4 8l4 4V9.500h4z" fill="#fff" stroke="#c8c8c8" />
                                            <path d="M16 9h5M18.500 5l2.500 3h-5zM24 7h5M24 8.500h5M26.500 11l2.500-2h-5z" stroke="#bbb" strokeWidth=".8" />
                                        </svg>
                                    </HistoryNav>
                                    <PageTitle>建筑和环境 / 楼层管理</PageTitle>
                                </PageHead>
                                <PageBody>
                                    <FloorPanel>
                                        <FloorLabel>楼层</FloorLabel>
                                        <FloorArea>
                                            <FloorTree>
                                                <FloorRow $depth={0}>
                                                    <Icon name="chevron" size={5} />
                                                    <FloorItem><Icon name="building" size={8} />建筑</FloorItem>
                                                </FloorRow>
                                                {floors.map(name => (
                                                    <FloorNode key={name} name={name} selected={floor} onSelect={setFloor} />
                                                ))}
                                            </FloorTree>
                                            <OrderButtons>
                                                <PushButton aria-label="上移"><Icon name="up" size={8} /></PushButton>
                                                <PushButton aria-label="下移"><Icon name="down" size={8} /></PushButton>
                                            </OrderButtons>
                                        </FloorArea>
                                        <Actions>
                                            <PushButton><Icon name="wand" size={7} />创建建筑/楼层</PushButton>
                                            <PushButton><Icon name="plus" size={8} />增加<Icon name="up" size={8} /></PushButton>
                                            <PushButton><Icon name="copy" size={8} />复制</PushButton>
                                            <PushButton><Icon name="plus" size={8} />增加<Icon name="down" size={8} /></PushButton>
                                            <PushButton><Icon name="cross" size={8} />删除</PushButton>
                                        </Actions>
                                    </FloorPanel>
                                    <Drawings>
                                        <Canvas><Elevation /></Canvas>
                                        <Canvas><CrossSection /></Canvas>
                                    </Drawings>
                                </PageBody>
                            </Page>
                        </DocBody>
                    </Documents>

                    <ParamPanel>
                        <ParamHead>
                            <Icon name="param" size={8} />参数表<Grip />
                            <Tool name="chevron" label="菜单" size={5} />
                            <Tool name="pin" label="固定" size={6} />
                            <Tool name="close" label="关闭" size={6} />
                        </ParamHead>
                        <ParamObject><Icon name="chevron" size={5} /><span>1* 楼层</span></ParamObject>
                        <ParamScroll>
                            <ParamTable>
                                <colgroup><col width="50%" /><col width="50%" /></colgroup>
                                <tbody>
                                    <Section title="部件符号" />
                                    <Choice id="symbol" label="符号" value="4TH FLOOR" selected icon="pencil" />
                                    <Choice id="note" label="说明" value="" />
                                    <Choice id="sheet" label="工作表名称" value="" fill="#e3eff9" icon="screen" />
                                    <Section title="主楼层标高" />
                                </tbody>
                                <MarkedBody>
                                    <Section title="位置" inner />
                                    <Param id="pos" row={{ name: 'H', sub: 's', value: '11.81', unit: 'm' }} />
                                    <Section title="尺寸" inner />
                                    {sizeParams.map((row, i) => <Param key={i} id={`size-${i}`} row={row} />)}
                                </MarkedBody>
                                <tbody>
                                    <Section title="供热/供冷系统" inner />
                                    {heatParams.map((row, i) => <Param key={i} id={`heat-${i}`} row={row} />)}
                                </tbody>
                            </ParamTable>
                            <ScrollY><Icon name="chevronUp" size={5} /><Icon name="chevron" size={5} /></ScrollY>
                        </ParamScroll>
                        <ParamHelp><strong>符号</strong>楼层名称</ParamHelp>
                    </ParamPanel>
                </Workspace>
            </Window>
            <ScreenEdge />
            <Taskbar><i /><i /><i /><i /><i /></Taskbar>
        </Desktop>
    );
};

export default App;
